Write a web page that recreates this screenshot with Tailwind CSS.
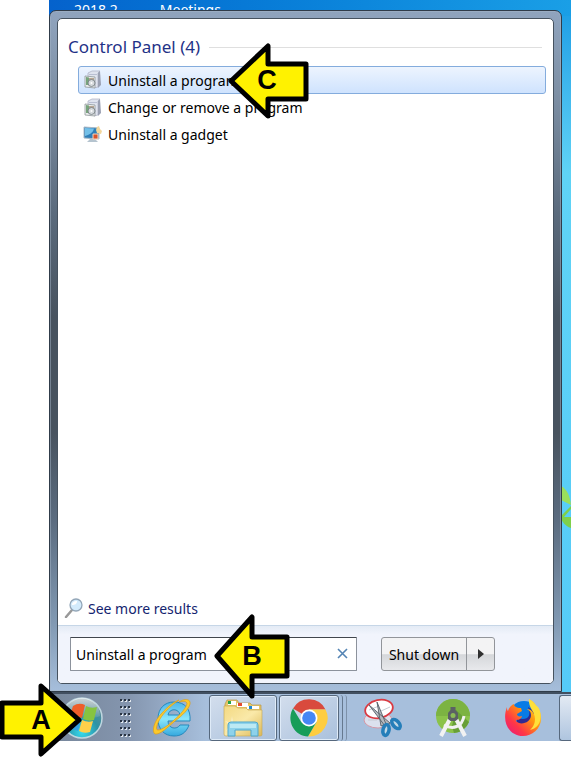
<!DOCTYPE html>
<html lang="en">
<head>
  <meta charset="UTF-8" />
  <meta name="viewport" content="width=device-width, initial-scale=1.0" />
  <title>Uninstall a program</title>
  <script src="https://cdn.jsdelivr.net/npm/@tailwindcss/browser@4"></script>
</head>
<body class="bg-white text-black font-['Noto_Sans',sans-serif]">
  <main class="relative overflow-hidden pl-[49px] pb-[31px]">

    <!-- Desktop -->
    <div class="relative flex flex-col pt-[10px] pr-[9px] bg-linear-to-b from-[#169be4] via-[#5fd3f6] via-25% to-[#55cbf8]">
      <div class="absolute inset-x-0 top-0 h-4 bg-linear-to-r from-[#0562cc] to-[#1a9fe6]"></div>
      <div class="absolute top-0 left-0 flex gap-[42px] pl-[25px] text-[14px] leading-[20px] text-white">
        <span>2018.2</span>
        <span>Meetings</span>
      </div>
      <svg class="absolute right-0 top-[480px] w-[10px] h-[50px]" viewBox="0 0 10 50">
        <path d="M0 6C6 9 9 16 10 25L0 20Z" fill="#9adf5c" />
        <path d="M0 36L10 26V29L3 37H10V48C4 46 2 42 0 39Z" fill="#7fd04a" />
      </svg>

      <!-- Start menu -->
      <div class="relative rounded-t-[7px] border border-[#303c4a] p-[7px] bg-[linear-gradient(#90a4be,#7e90a5_12%,#5a6a7c_30%,#48535f_45%,#48535f_62%,#5b6c80_75%,#8199b3_90%,#a6bedb)] shadow-[inset_0_0_0_1px_#a3b3c680]">
        <div class="flex flex-col rounded-[5px] border border-[#46525f] bg-white overflow-hidden">
          <section class="h-[606px] flex flex-col pl-[10px] pr-[7px] pt-[13px] pb-[3px]">
            <div class="flex items-center gap-[9px] h-[30px] pr-1">
              <h1 class="text-[17px] leading-[30px] text-[#1f3287]">Control Panel (4)</h1>
              <div class="flex-1 h-px bg-[#dfdfdf]"></div>
            </div>
            <ul class="pl-[10px] pt-1 text-[14px]">
              <li><button class="flex items-center w-full h-[28px] pl-1 gap-[5px] rounded-[3px] border border-[#84acdd] bg-linear-to-b from-[#edf4fe] to-[#cfe3fe] text-left">
                <svg class="w-5 h-5 shrink-0" viewBox="0 0 20 20">
                  <path d="M5 3L9 1H17L15 3V17L11 18L5 6Z" fill="#dfe3ee" stroke="#a9aec0" stroke-width=".7" /><path d="M15 3L17 1L18 15L15 18Z" fill="#9ba1b3" />
                  <path d="M6 4H14V5H6Z" fill="#b9bfd2" />
                  <path d="M2 6L12 7V18L2 17Z" fill="#eceeee" stroke="#8f9799" stroke-width=".8" /><path d="M3 7L6 7.500V15L3 15Z" fill="#78a47c" /><path d="M6 8L11 8V11L6 11Z" fill="#b8a592" />
                  <circle cx="8.500" cy="13" r="3.500" fill="#d5d9dc" stroke="#6f777c" stroke-width=".8" /><circle cx="8.500" cy="13" r="1" fill="#fff" />
                </svg>
                Uninstall a program</button></li>
              <li><button class="flex items-center w-full h-[27px] pl-[5px] gap-[5px] text-left">
                <svg class="w-5 h-5 shrink-0" viewBox="0 0 20 20">
                  <path d="M5 3L9 1H17L15 3V17L11 18L5 6Z" fill="#dfe3ee" stroke="#a9aec0" stroke-width=".7" /><path d="M15 3L17 1L18 15L15 18Z" fill="#9ba1b3" />
                  <path d="M6 4H14V5H6Z" fill="#b9bfd2" />
                  <path d="M2 6L12 7V18L2 17Z" fill="#eceeee" stroke="#8f9799" stroke-width=".8" /><path d="M3 7L6 7.500V15L3 15Z" fill="#78a47c" /><path d="M6 8L11 8V11L6 11Z" fill="#b8a592" />
                  <circle cx="8.500" cy="13" r="3.500" fill="#d5d9dc" stroke="#6f777c" stroke-width=".8" /><circle cx="8.500" cy="13" r="1" fill="#fff" />
                </svg>
                Change or remove a program</button></li>
              <li><button class="flex items-center w-full h-[27px] pl-[5px] gap-[5px] text-left">
                <svg class="w-5 h-5 shrink-0" viewBox="0 0 20 20">
                  <path d="M1 2L16 3V14L1 13Z" fill="#2f7fb8" stroke="#a9b9c7" /><path d="M2 3L11 3.500C10 8 6 10 2 11Z" fill="#74c0e8" />
                  <path d="M7 14H12L15 17H4Z" fill="#b5c4cf" /><path d="M10 9H15V14H10Z" fill="#d9532b" stroke="#f5d5bc" /><path d="M14 2L16 1L17 4L19 6L18 9L14 8L13 5Z" fill="#f2d69b" />
                </svg>
                Uninstall a gadget</button></li>
            </ul>
            <a href="#" class="mt-auto flex items-center gap-1 h-[28px] -ml-1 text-[14px] text-[#14246f]">
              <svg class="w-5 h-5" viewBox="0 0 20 20">
                <path d="M2 19L8 12" stroke="#999" stroke-width="2.500" stroke-linecap="round" />
                <circle cx="12" cy="7" r="6" fill="#d3ebfc" stroke="#93a6b8" stroke-width="1.300" /><path d="M8 7C8 4 10 3 13 3C13 6 11 7 8 7Z" fill="#fff" />
              </svg>
              See more results</a>
          </section>

          <!-- Search and power -->
          <form class="flex items-start gap-6 h-[58px] border-t border-[#c6d6e7] bg-linear-to-b from-[#e4ebf5] via-[#f1f4fc] via-15% to-[#f1f4fc] pl-3 pt-[11px] text-[14px]">
            <div class="relative flex w-[287px]">
              <input type="text" aria-label="Search programs and files" value="Uninstall a program" class="w-full h-[34px] pl-[5px] pr-8 border border-[#8c929c] border-t-[#41464d] rounded-[1px] bg-white" />
              <button type="button" aria-label="Clear" class="absolute right-2 top-[10px]">
                <svg class="w-[13px] h-[13px]" viewBox="0 0 13 13"><path d="M2 2L11 11M11 2L2 11" stroke="#5484b4" stroke-width="1.600" /></svg>
              </button>
            </div>
            <div class="flex h-[34px] rounded-[3px] border border-[#92959a] bg-linear-to-b from-[#f3f3f4] from-50% via-[#d5d7da] via-52% to-[#e8e9ec]">
              <button type="button" class="w-[85px] border-r border-[#92959a]">Shut down</button>
              <button type="button" aria-label="More options" class="w-[27px] flex items-center justify-center">
                <svg class="w-[6px] h-[10px]" viewBox="0 0 6 10"><path d="M0 0L6 5L0 10Z" fill="#303030" /></svg>
              </button>
            </div>
          </form>
        </div>
      </div>
    </div>

    <!-- Taskbar -->
    <nav class="flex items-center h-[49px] border-t-2 border-[#414f60] bg-linear-to-r from-[#76869a] via-[#8495ae] via-15% to-[#a7bfdc] to-30%">
      <button aria-label="Start" class="ml-[12px] shrink-0">
        <svg class="w-[43px] h-[44px]" viewBox="0 0 43 44">
          <defs>
            <radialGradient id="orb" cx=".5" cy=".85" r=".8"><stop offset="0" stop-color="#35dcf0" /><stop offset=".5" stop-color="#2b93a6" /><stop offset="1" stop-color="#6d8790" /></radialGradient>
            <linearGradient id="gloss" x2="0" y2="1"><stop stop-color="#fff" stop-opacity=".65" /><stop offset="1" stop-color="#fff" stop-opacity=".1" /></linearGradient>
          </defs>
          <circle cx="21" cy="22" r="20" fill="url(#orb)" stroke="#bed7e0" stroke-width="1.500" />
          <path d="M3 20A18 18 0 0 1 39 20C29 25 12 16 3 20Z" fill="url(#gloss)" />
          <path d="M12 10Q18 6 24 9L21 22Q15 19 8 22Z" fill="#ee5e2a" />
          <path d="M25 10Q30 13 36 11L33 24Q28 26 22 23Z" fill="#86c440" />
          <path d="M8 23Q14 20 20 23L17 35Q12 32 6 34Z" fill="#36a2e3" />
          <path d="M21 24Q27 27 32 25L29 36Q23 38 18 35Z" fill="#ffd04a" />
        </svg>
      </button>
      <svg class="ml-[16px] w-[11px] h-[40px] shrink-0" viewBox="0 0 11 40">
        <defs><pattern id="grip" width="4" height="7" patternUnits="userSpaceOnUse"><path d="M1 2H3V4H1Z" fill="#e2e8ee" /><path d="M0 1H2V3H0Z" fill="#293443" /></pattern></defs>
        <rect width="11" height="40" fill="url(#grip)" />
      </svg>
      <button aria-label="Internet Explorer" class="ml-[21px] shrink-0">
        <svg class="w-[40px] h-[40px]" viewBox="0 0 40 40">
          <defs><linearGradient id="ie" x2="0" y2="1"><stop stop-color="#4fb5e8" /><stop offset=".5" stop-color="#8ae6fc" /><stop offset="1" stop-color="#35a8de" /></linearGradient></defs>
          <path fill-rule="evenodd" d="M38 23H16C16 31 25 32 28 27H37C34 35 29 38 22 38C12 38 6 31 6 21C6 10 13 4 22 4C33 4 39 11 38 23ZM16 17H28C27 10 17 10 16 17Z" fill="url(#ie)" stroke="#2789bd" />
          <path d="M27 4C33 0 39 1 38 6C37 11 30 18 23 23C16 29 8 37 3 36C-1 33 3 22 9 16C17 7 22 4 27 2C20 7 12 14 8 21C5 26 3 32 6 32C10 32 18 26 22 22C28 17 35 9 35 5C34 3 31 3 27 4Z" fill="#fcc92b" stroke="#dc9f18" stroke-width=".7" />
        </svg>
      </button>
      <button aria-label="File Explorer" class="ml-[17px] w-[68px] h-[46px] shrink-0 flex items-center justify-center rounded-[3px] border border-[#56687d] bg-linear-to-br from-[#d3deed] to-[#a9c0dc] shadow-[inset_0_0_0_1px_#dfebf8]">
        <svg class="w-[40px] h-[40px]" viewBox="0 0 40 40">
          <defs><linearGradient id="folder" x2="1" y2="1"><stop stop-color="#f3d982" /><stop offset=".5" stop-color="#fae9a9" /><stop offset="1" stop-color="#dcb857" /></linearGradient></defs>
          <path d="M3 4L4 2H14L16 5H27L29 7H38V15H2V6Z" fill="#e5c667" stroke="#b99747" stroke-width=".7" />
          <path d="M5 3H13V7H5ZM14 5H25V9H14ZM24 8H36V11H24Z" fill="#fff" /><path d="M5 3H8V6H5Z" fill="#23a445" /><path d="M15 5H19V8H15Z" fill="#e34b30" /><path d="M26 8H29V11H26Z" fill="#1e89d2" />
          <path d="M1 8H12L15 10H23L25 12H39V37Q39 38 37 38H3Q1 38 1 36Z" fill="url(#folder)" stroke="#c5a453" stroke-width=".6" />
          <path d="M9 18L10 25L16 23L11 28L14 34L9 29L3 33L7 27L2 23L8 25Z" fill="#fff" fill-opacity=".5" />
          <path d="M5 38V27Q5 24 8 24H32Q35 24 35 27V38H28V32H12V38Z" fill="#8ed2ea" stroke="#4fa6cd" /><path d="M7 26H33V30H7Z" fill="#c8eff6" fill-opacity=".8" />
        </svg>
      </button>
      <button aria-label="Chrome" class="ml-[2px] w-[60px] h-[46px] shrink-0 flex items-center justify-center rounded-[3px] border border-[#56687d] bg-linear-to-br from-[#d3deed] to-[#a9c0dc] shadow-[inset_0_0_0_1px_#dfebf8]">
        <svg class="w-[38px] h-[38px]" viewBox="0 0 38 38">
          <path d="M19 19L3 9.500A18.500 18.500 0 0 1 35.500 10.500H19Z" fill="#d94a3d" />
          <path d="M19 10.500H35.500A18.500 18.500 0 0 1 18 37.500L26.500 23Z" fill="#fecd40" />
          <path d="M3 9.500L11.500 23.500L19 27L26.500 23L18 37.500A18.500 18.500 0 0 1 3 9.500Z" fill="#179d59" />
          <circle cx="19" cy="19" r="8.500" fill="#fff" /><circle cx="19" cy="19" r="6.800" fill="#4687f4" />
        </svg>
      </button>
      <div class="w-1 h-[46px] shrink-0 border-r border-[#66798f] rounded-r-[3px]"></div>
      <div class="w-1 h-[46px] shrink-0 border-r border-[#7d91a9] rounded-r-[3px]"></div>
      <button aria-label="Snipping Tool" class="ml-[16px] shrink-0">
        <svg class="w-[40px] h-[40px]" viewBox="0 0 40 40">
          <ellipse cx="15" cy="22" rx="14" ry="8" fill="#dce1ee" stroke="#d598a6" />
          <ellipse cx="16" cy="11" rx="14" ry="9" transform="rotate(-12 16 11)" fill="#fff" stroke="#da3a42" stroke-width="1.800" />
          <path d="M6 12L16 8M18 13L27 9M5 22L14 22" stroke="#c5cbd3" />
          <path d="M6 7L27 25L22 28ZM14 4L23 26L18 28Z" fill="#b5bac0" stroke="#555f68" stroke-width=".9" />
          <ellipse cx="23" cy="32" rx="3" ry="5.500" transform="rotate(12 23 32)" fill="#c1d8e6" stroke="#257eb9" stroke-width="3.500" />
          <ellipse cx="33" cy="26" rx="3" ry="5.500" transform="rotate(-42 33 26)" fill="#c1d8e6" stroke="#257eb9" stroke-width="3.500" />
        </svg>
      </button>
      <button aria-label="Android Studio" class="ml-[30px] shrink-0">
        <svg class="w-[40px] h-[40px]" viewBox="0 0 40 40">
          <circle cx="20" cy="18" r="17" fill="#8bc34a" /><path d="M3 18A17 17 0 0 1 37 18Z" fill="#7cb342" />
          <path d="M23 12L36 24A17 17 0 0 1 21 35L19 28Z" fill="#689f38" />
          <path d="M18 19L8 38M22 19L32 38" stroke="#f2f2f2" stroke-width="4" />
          <path d="M11 27C20 32 29 29 31 18" fill="none" stroke="#f2f2f2" stroke-width="3" />
          <path d="M17.500 9H22.500V12L25 15V21L22.500 23H17.500L15 21V15L17.500 12Z" fill="#5b6164" /><circle cx="20" cy="17.500" r="2.500" fill="#8bbb56" />
        </svg>
      </button>
      <button aria-label="Firefox" class="ml-[30px] shrink-0">
        <svg class="w-[40px] h-[40px]" viewBox="0 0 40 40">
          <defs><linearGradient id="fox" x1="1" x2="0" y2="1"><stop stop-color="#fff44f" /><stop offset=".4" stop-color="#ff980e" /><stop offset=".7" stop-color="#ff3647" /><stop offset="1" stop-color="#e31587" /></linearGradient></defs>
          <circle cx="21" cy="18" r="15" fill="#087be5" /><path d="M14 25C20 30 33 27 31 13L25 9C29 19 24 23 14 20Z" fill="#312a91" />
          <path d="M4 9C4 11 4 12 5 13C6 9 10 6 11 6C11 8 13 10 18 10L19 13L14 16C14 18 16 19 19 18C18 23 13 21 13 23C17 28 28 25 28 17C28 13 25 12 24 11C28 11 30 14 31 16C32 9 26 7 26 1C33 4 32 8 36 11C43 27 31 38 20 38C7 38 -2 25 4 9Z" fill="url(#fox)" />
          <path d="M26 1C25 10 32 13 32 21C32 27 29 30 27 32C40 29 39 15 35 9C31 6 30 4 26 1Z" fill="#ffe03a" />
        </svg>
      </button>
      <button aria-label="Open window" class="ml-auto w-[12px] h-[46px] shrink-0 rounded-l-[3px] border border-r-0 border-[#56687d] bg-linear-to-b from-[#e3eaf3] to-[#afc5df]"></button>
    </nav>

    <!-- Step markers -->
    <svg class="absolute left-0 top-0 w-[320px] h-[771px] pointer-events-none font-['Liberation_Sans',sans-serif] font-bold text-[27px]" viewBox="0 0 320 771">
      <g fill="#fff200" stroke="#000" stroke-width="5" stroke-linejoin="round">
        <path d="M2 703H41V686L79 720L41 754V737H2Z" />
        <path d="M217 656L252 617V637H287V676H252V696Z" />
        <path d="M231 81L268 46V64H306V99H268V116Z" />
      </g>
      <g text-anchor="middle">
        <text x="41" y="729">A</text>
        <text x="252" y="665">B</text>
        <text x="267" y="89">C</text>
      </g>
    </svg>
  </main>
</body>
</html>
